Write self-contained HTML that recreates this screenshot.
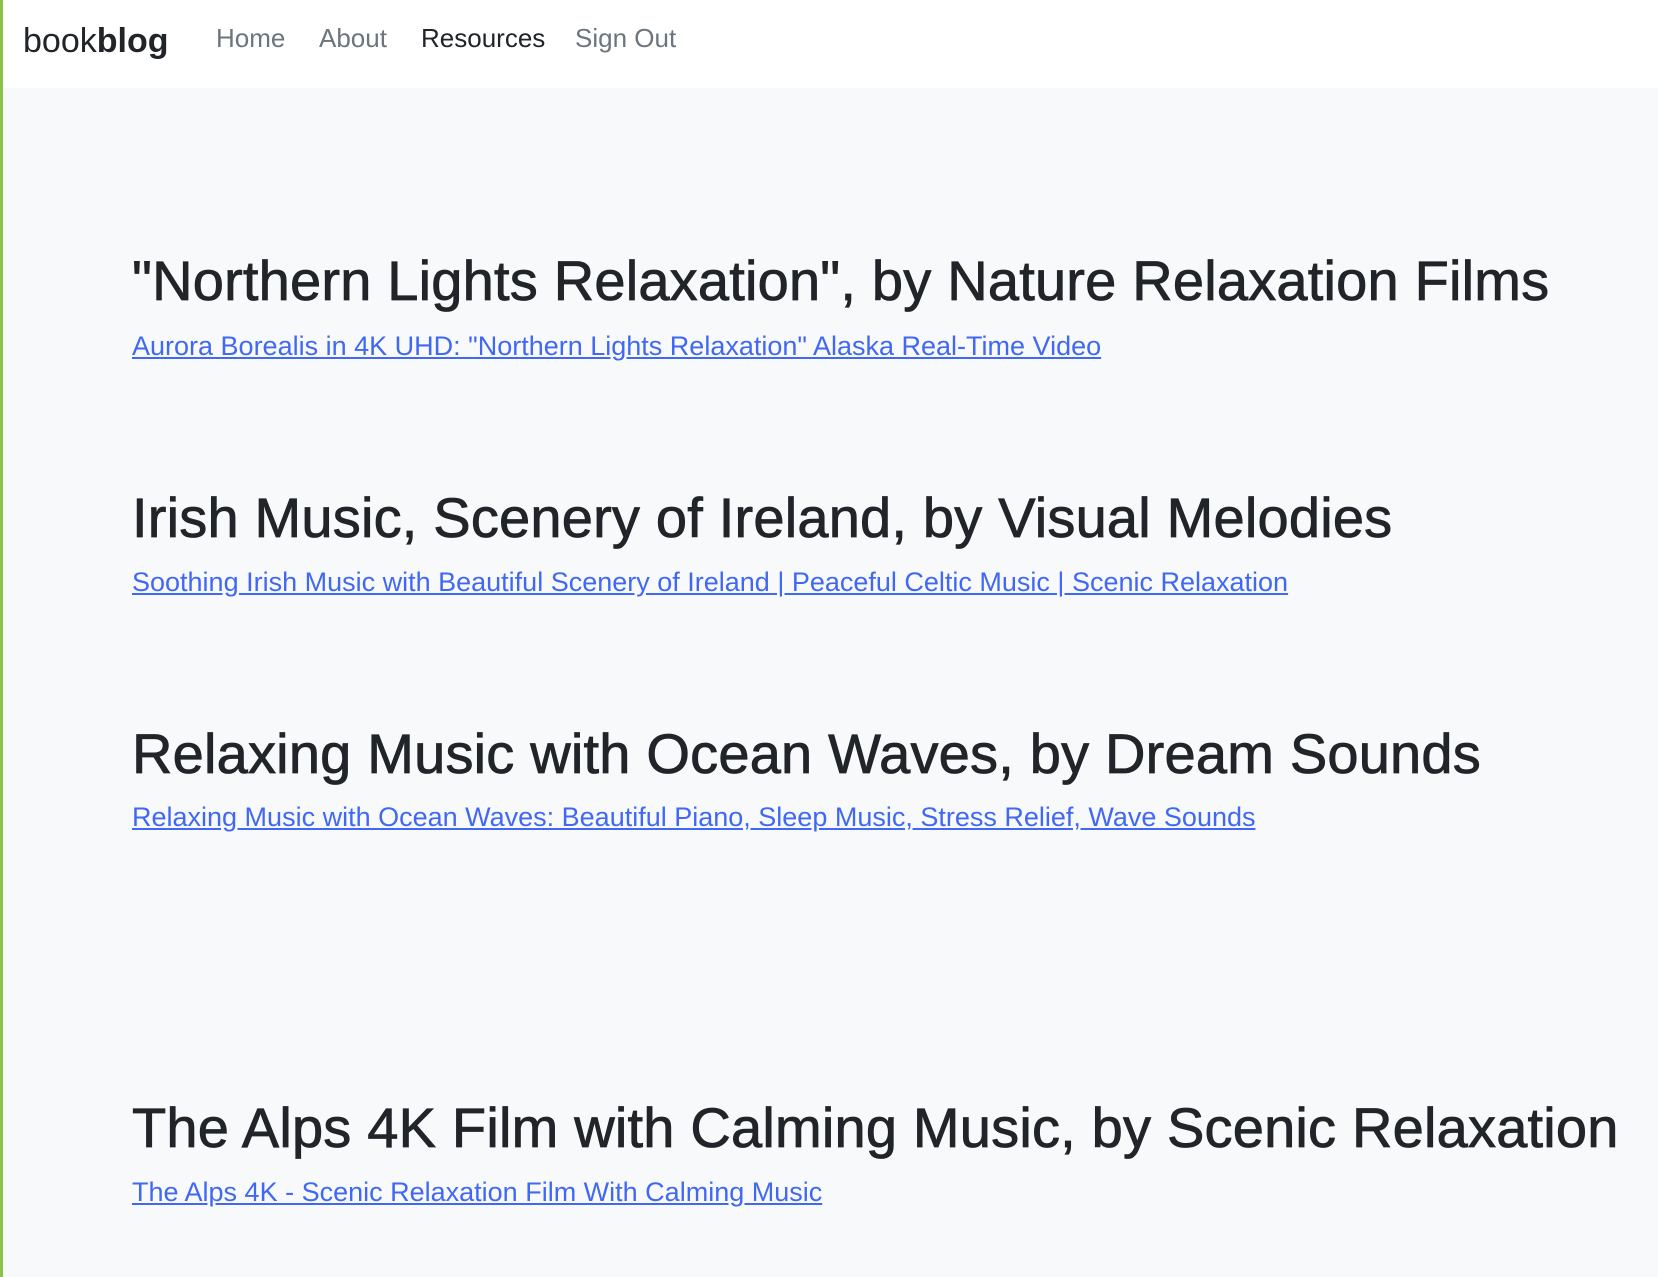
<!DOCTYPE html>
<html><head><meta charset="utf-8"><style>
*{margin:0;padding:0;box-sizing:border-box}
body{width:1658px;height:1277px;background:#f8f9fa;font-family:"Liberation Sans",sans-serif;position:relative;overflow:hidden;border-left:3px solid #8bc34a}
.hdr{position:absolute;left:0;top:0;width:1658px;height:88px;background:#fff}
.a{position:absolute;line-height:1;white-space:nowrap}
.brand{left:20px;top:24px;font-size:34px;color:#212529}
.brand b{font-weight:bold}
.nav{font-size:26px;top:25px;color:#6c757d}
h2{position:absolute;left:129px;font-size:56px;font-weight:normal;color:#212529;line-height:1;white-space:nowrap;-webkit-text-stroke:0.8px #212529;letter-spacing:0.2px}
a.l{position:absolute;left:129px;font-size:27px;color:#4068f5;text-decoration:underline;line-height:1;white-space:nowrap}
</style></head><body>
<div class="hdr"></div>
<div class="a brand">book<b>blog</b></div>
<div class="a nav" style="left:213px">Home</div>
<div class="a nav" style="left:316px">About</div>
<div class="a nav" style="left:418px;color:#212529">Resources</div>
<div class="a nav" style="left:572px">Sign Out</div>

<h2 style="top:253px">"Northern Lights Relaxation", by Nature Relaxation Films</h2>
<a class="l" href="#" style="top:333px">Aurora Borealis in 4K UHD: "Northern Lights Relaxation" Alaska Real-Time Video</a>

<h2 style="top:490px">Irish Music, Scenery of Ireland, by Visual Melodies</h2>
<a class="l" href="#" style="top:569px">Soothing Irish Music with Beautiful Scenery of Ireland | Peaceful Celtic Music | Scenic Relaxation</a>

<h2 style="top:726px">Relaxing Music with Ocean Waves, by Dream Sounds</h2>
<a class="l" href="#" style="top:804px">Relaxing Music with Ocean Waves: Beautiful Piano, Sleep Music, Stress Relief, Wave Sounds</a>

<h2 style="top:1100px">The Alps 4K Film with Calming Music, by Scenic Relaxation</h2>
<a class="l" href="#" style="top:1179px">The Alps 4K - Scenic Relaxation Film With Calming Music</a>
</body></html>
